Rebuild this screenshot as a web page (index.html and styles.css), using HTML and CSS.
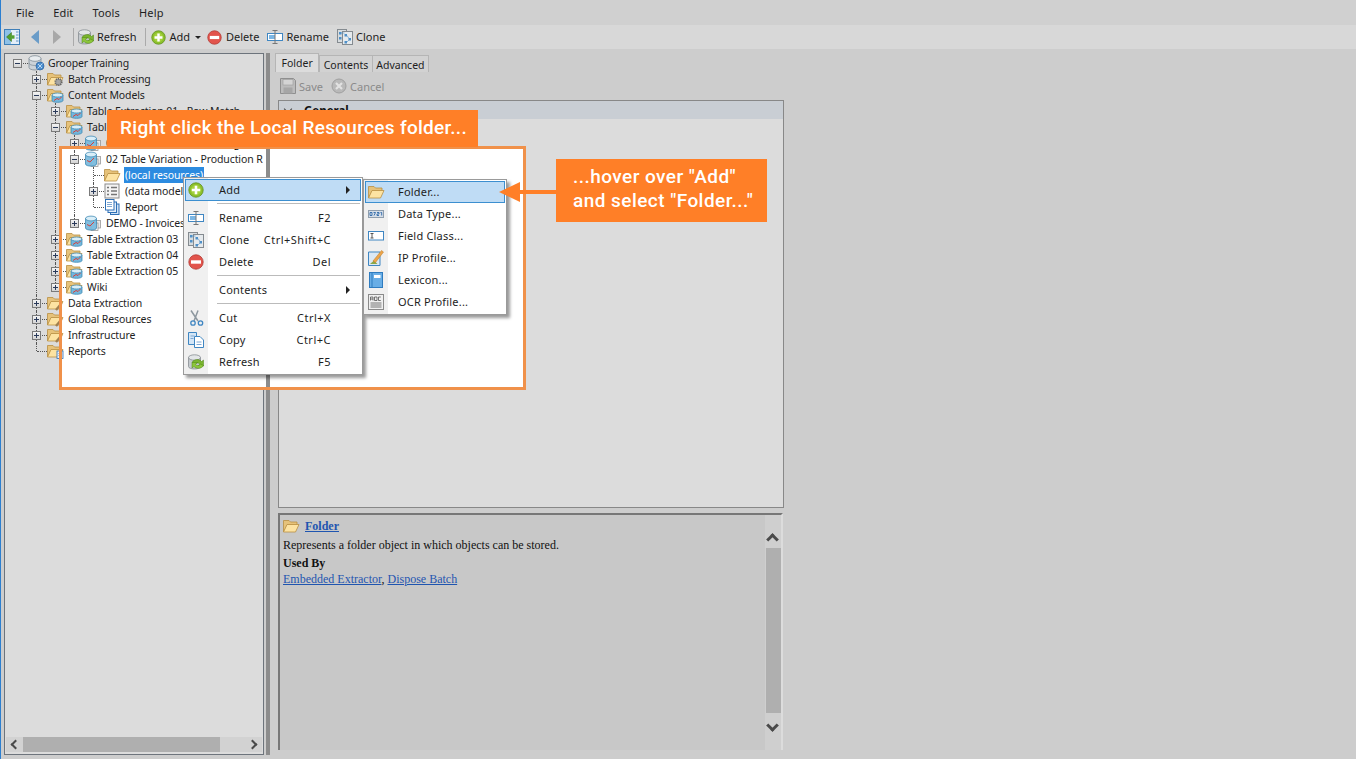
FILE: index.html
```html
<!DOCTYPE html>
<html lang="en">
<head>
<meta charset="utf-8">
<title>Grooper</title>
<link rel="stylesheet" href="styles.css">
</head>
<body>
<svg class="defs" width="0" height="0" aria-hidden="true">
  <defs>
    <symbol id="folder" viewBox="0 0 16 16" overflow="visible">
      <path d="M.5 2.500h5.500l1.500 1.500h6.500v3H4.500L.5 14z" fill="#e6c27a" stroke="#b98f42" stroke-width=".8"/>
      <path d="M.5 14l3.500-7.500h12l-3.500 7.500z" fill="#fde3a2" stroke="#b98f42" stroke-width=".8"/>
    </symbol>
    <symbol id="cyl" viewBox="0 0 16 16">
      <path d="M1 3.500v9c0 3.300 12 3.300 12 0v-9z" fill="#ccd2d8" stroke="#7f8c96" stroke-width=".8"/>
      <ellipse cx="7" cy="3.500" rx="6" ry="2.800" fill="#e8ecef" stroke="#7f8c96" stroke-width=".8"/>
      <path d="M1 8c0 3.300 12 3.300 12 0" fill="none" stroke="#7f8c96" stroke-width=".7"/>
    </symbol>
    <symbol id="root" viewBox="0 0 16 16" overflow="visible">
      <use href="#cyl" width="16" height="16"/>
      <circle cx="12" cy="11" r="4" fill="#4d8fd0" stroke="#2a5f9c" stroke-width=".7"/>
      <path d="M9.500 13.500l5-5M10 9l4 4" stroke="#dcebf8" stroke-width=".8"/>
    </symbol>
    <symbol id="fmodel" viewBox="0 0 16 16" overflow="visible">
      <use href="#folder" width="16" height="16"/>
      <path d="M5 8v5.500c0 2.400 11 2.400 11 0V8z" fill="#74b7dc" stroke="#2f7fae" stroke-width=".7"/>
      <ellipse cx="10.500" cy="8" rx="5.500" ry="2" fill="#d9eef8" stroke="#2f7fae" stroke-width=".7"/>
      <path d="M7 13.500l3-2 2 1 2.500-2.500" stroke="#d6403a" stroke-width="1" fill="none"/>
    </symbol>
    <symbol id="fgear" viewBox="0 0 16 16" overflow="visible">
      <use href="#folder" width="16" height="16"/>
      <circle cx="11.500" cy="11" r="3.200" fill="#a5a5a5" stroke="#666" stroke-width="1.800" stroke-dasharray="1.200 .8"/>
    </symbol>
    <symbol id="fwrench" viewBox="0 0 16 16" overflow="visible">
      <use href="#folder" width="16" height="16"/>
      <path d="M9 15l5-6" stroke="#a08052" stroke-width="2.400"/>
    </symbol>
    <symbol id="freport" viewBox="0 0 16 16" overflow="visible">
      <use href="#folder" width="16" height="16"/>
      <rect x="10" y="8" width="6" height="7.500" fill="#e9f1fa" stroke="#2d6fb5" stroke-width=".8"/>
      <path d="M11.500 10.500h3M11.500 12.500h3" stroke="#2d6fb5" stroke-width=".7"/>
    </symbol>
    <symbol id="model" viewBox="0 0 16 16">
      <rect x="8.500" y="5.500" width="7" height="7.500" fill="#e9e9e9" stroke="#8a8a8a" stroke-width=".7"/>
      <rect x="6" y="8" width="7" height="7.500" fill="#f7f7f7" stroke="#8a8a8a" stroke-width=".7"/>
      <path d="M.5 3.500v9.500c0 2.800 11 2.800 11 0V3.500z" fill="#74b7dc" fill-opacity=".9" stroke="#2f7fae" stroke-width=".7"/>
      <ellipse cx="6" cy="3.500" rx="5.500" ry="2.400" fill="#d9eef8" stroke="#2f7fae" stroke-width=".7"/>
      <path d="M2 9.500l3 1.500 4-4" stroke="#d6403a" stroke-width="1" fill="none"/>
    </symbol>
    <symbol id="datamodel" viewBox="0 0 16 16">
      <rect x="1" y="1" width="14" height="14" fill="#f4f4f4" stroke="#8a8a8a"/>
      <path d="M3 4.500h2M3 8h2M3 11.500h2M7 4.500h6M7 8h6M7 11.500h6" stroke="#757575" stroke-width="1.500"/>
    </symbol>
    <symbol id="report" viewBox="0 0 16 16">
      <rect x="6.500" y="5" width="8.500" height="10.500" fill="#cfe2f5" stroke="#2d6fb5"/>
      <rect x="4" y="3" width="8.500" height="10.500" fill="#e4effa" stroke="#2d6fb5"/>
      <rect x="1.500" y=".5" width="8.500" height="10.500" fill="#fff" stroke="#2d6fb5"/>
      <path d="M3 3.500h5M3 5.500h5M3 7.500h5" stroke="#7da7d3"/>
    </symbol>
    <symbol id="plus" viewBox="0 0 16 16">
      <circle cx="8" cy="8" r="7.200" fill="#8cc02c" stroke="#5f8f1c" stroke-width=".8"/>
      <circle cx="8" cy="8" r="5" fill="#a5d13f"/>
      <path d="M8 3.800v8.400M3.800 8h8.400" stroke="#fff" stroke-width="2.600"/>
    </symbol>
    <symbol id="minus" viewBox="0 0 16 16">
      <circle cx="8" cy="8" r="7.200" fill="#e2544c" stroke="#b33a34" stroke-width=".8"/>
      <rect x="3" y="6.300" width="10" height="3.400" fill="#fff"/>
    </symbol>
    <symbol id="rename" viewBox="0 0 16 16">
      <rect x=".5" y="4.500" width="15" height="7" fill="#fff" stroke="#3f86c2"/>
      <rect x="2" y="6" width="6" height="4" fill="#7cb6e4"/>
      <path d="M5.500 1.500h5M8 1.500v13M5.500 14.500h5" stroke="#777" stroke-width="1" fill="none"/>
    </symbol>
    <symbol id="clone" viewBox="0 0 16 16">
      <rect x=".5" y=".5" width="9" height="13" fill="#d7dcdf" stroke="#858b90"/>
      <rect x="5.500" y="2.500" width="10" height="13" fill="#e6eaed" stroke="#858b90"/>
      <path d="M2 3h2.500v2.500H2zM2 8h2.500v2.500H2zM7.500 5H10v2.500H7.500zM11.500 9H14v2.500h-2.500zM7.500 12H10v2.500H7.500z" fill="#4f90c8"/>
      <path d="M4.500 4h3M10 6.500l2 3M10 13l2-2" stroke="#4f90c8" stroke-width=".6"/>
    </symbol>
    <symbol id="refresh" viewBox="0 0 16 16">
      <path d="M.5 3.500v9c0 3.300 12 3.300 12 0v-9z" fill="#c6cbcf" stroke="#878d92" stroke-width=".8"/>
      <ellipse cx="6.500" cy="3.500" rx="6" ry="2.700" fill="#e3e6e8" stroke="#878d92" stroke-width=".8"/>
      <path d="M4 8.500C5.800 4.800 11.500 4.800 13.500 7.500l2-1.500v6h-5.500l2-1.700c-1.200-1.700-3.700-1.700-5 .2z" fill="#7ab52f" stroke="#4f8319" stroke-width=".5"/>
      <path d="M15.500 11.500c-1.800 3.500-7.500 3.700-9.500 1L4 14V8.500h5.500l-2 1.800c1.200 1.700 3.700 1.700 5-.2z" fill="#8cc63a" stroke="#4f8319" stroke-width=".5"/>
    </symbol>
    <symbol id="scissors" viewBox="0 0 16 16">
      <path d="M3 .5l7 10.500M10 .5L6 11" stroke="#8d979f" stroke-width="1.500" fill="none"/>
      <circle cx="5" cy="13" r="2.200" fill="none" stroke="#3f86c2" stroke-width="1.300"/>
      <circle cx="12.500" cy="13" r="2.200" fill="none" stroke="#3f86c2" stroke-width="1.300"/>
    </symbol>
    <symbol id="copy" viewBox="0 0 16 16">
      <path d="M.5.500h8v12h-8z" fill="#d4e6f6" stroke="#3f86c2"/>
      <path d="M6.500 4.500h5.500l3.500 3.500v7.500h-9z" fill="#fff" stroke="#3f86c2"/>
      <path d="M2.500 4h4M2.500 6.500h3M8.500 10h5M8.500 12.500h5" stroke="#7da7d3"/>
    </symbol>
    <symbol id="datatype" viewBox="0 0 16 16">
      <rect x=".5" y="4.500" width="15" height="7" fill="#d6dee8" stroke="#8f9eae"/>
      <path d="M2 6.500h2v3H2zM5.500 6.500h2L6 9.500M9 6.500h2v1.500H9v1.500h2M12.500 6.500h1.200v3" fill="none" stroke="#2d68a8" stroke-width=".9"/>
    </symbol>
    <symbol id="field" viewBox="0 0 16 16">
      <rect x=".5" y="3.500" width="15" height="8.500" fill="#fff" stroke="#3f86c2"/>
      <path d="M2.500 5.500h3M4 5.500v4.500M2.500 10h3" stroke="#555" fill="none"/>
    </symbol>
    <symbol id="ip" viewBox="0 0 16 16">
      <path d="M.5 2h11.500v13.500H.5z" fill="#dbe8f4" stroke="#3f86c2"/>
      <path d="M2 14l4-3.500 3.500 3.500z" fill="#89a94a"/>
      <path d="M5 11l8.500-10.500L15.500 2 7.500 12.500z" fill="#eda54a" stroke="#b97822" stroke-width=".5"/>
    </symbol>
    <symbol id="lexicon" viewBox="0 0 16 16">
      <rect x="1.500" y=".5" width="13" height="15" fill="#69aee6" stroke="#2f7cc0"/>
      <path d="M4 .5v15" stroke="#2f7cc0"/>
      <rect x="6" y="3" width="6.500" height="3" fill="#fff"/>
    </symbol>
    <symbol id="ocr" viewBox="0 0 16 16">
      <rect x=".5" y=".5" width="15" height="15" fill="#f0f0f0" stroke="#8a8a8a"/>
      <path d="M2.500 6.500V3h2.500v3.500M2.500 5h2.500M6.500 3v3.500h2.500V3H6.500M12.800 3H10.500v3.500h2.300M2.500 9h11M2.500 11h11M2.500 13h11" fill="none" stroke="#555" stroke-width=".8"/>
    </symbol>
    <symbol id="nav" viewBox="0 0 16 16">
      <rect x=".5" y=".5" width="15" height="15" fill="#e4eef8" stroke="#3f7fb8"/>
      <rect x="1" y="1" width="6" height="14" fill="#8fc1e8"/>
      <path d="M7.500 3.500v9L2.500 8z" fill="#52a02c" stroke="#2e6e15" stroke-width=".5"/>
      <rect x="7.500" y="6.300" width="3" height="3.400" fill="#52a02c"/>
      <path d="M12 3h2.500M12 6h2.500M12 9h2.500M12 12h2.500" stroke="#5f94c4"/>
    </symbol>
    <symbol id="save" viewBox="0 0 16 16">
      <path d="M.5.500h13l2 2v13H.5z" fill="#bcbcbc" stroke="#8f8f8f"/>
      <rect x="3" y="1.500" width="10" height="5.500" fill="#d4d4d4" stroke="#9a9a9a" stroke-width=".6"/>
      <rect x="3.500" y="9.500" width="9" height="6" fill="#a6a6a6"/>
    </symbol>
    <symbol id="cancel" viewBox="0 0 16 16">
      <circle cx="8" cy="8" r="7" fill="#b9b9b9" stroke="#a0a0a0"/>
      <path d="M5 5l6 6M11 5l-6 6" stroke="#e2e2e2" stroke-width="2.200"/>
    </symbol>
  </defs>
</svg>

<header class="menubar">
  <span>File</span><span>Edit</span><span>Tools</span><span>Help</span>
</header>

<div class="toolbar">
  <svg class="ic nav-ic"><use href="#nav"/></svg>
  <span class="tri tri-back"></span>
  <span class="tri tri-fwd"></span>
  <span class="tsep"></span>
  <span class="tool"><svg class="ic"><use href="#refresh"/></svg><span class="tt">Refresh</span></span>
  <span class="tsep tsep-b"></span>
  <span class="tool tool-add"><svg class="ic ic-15"><use href="#plus"/></svg><span class="tt">Add</span><span class="drop"></span></span>
  <span class="tool tool-del"><svg class="ic ic-15"><use href="#minus"/></svg><span class="tt">Delete</span></span>
  <span class="tool tool-ren"><svg class="ic"><use href="#rename"/></svg><span class="tt">Rename</span></span>
  <span class="tool tool-clone"><svg class="ic"><use href="#clone"/></svg><span class="tt">Clone</span></span>
</div>

<main class="workspace">
  <section class="treepane">
    <div class="treebody">
      <ul class="tree">
        <li class="last">
          <div class="row"><span class="exp minus"></span><svg class="ic"><use href="#root"/></svg><span class="lbl lbl-root">Grooper Training</span></div>
          <ul>
            <li><div class="row"><span class="exp"></span><svg class="ic"><use href="#fgear"/></svg><span class="lbl">Batch Processing</span></div></li>
            <li>
              <div class="row"><span class="exp minus"></span><svg class="ic"><use href="#fmodel"/></svg><span class="lbl">Content Models</span></div>
              <ul>
                <li><div class="row"><span class="exp"></span><svg class="ic"><use href="#fmodel"/></svg><span class="lbl">Table Extraction 01 - Row Match</span></div></li>
                <li>
                  <div class="row"><span class="exp minus"></span><svg class="ic"><use href="#fmodel"/></svg><span class="lbl">Table Extraction 02 - Variation</span></div>
                  <ul>
                    <li><div class="row"><span class="exp"></span><svg class="ic"><use href="#model"/></svg><span class="lbl">01 Table Variation - Training</span></div></li>
                    <li>
                      <div class="row"><span class="exp minus"></span><svg class="ic"><use href="#model"/></svg><span class="lbl">02 Table Variation - Production R</span></div>
                      <ul>
                        <li><div class="row"><span class="noexp"></span><svg class="ic"><use href="#folder"/></svg><span class="lbl selected">(local resources)</span></div></li>
                        <li><div class="row"><span class="exp"></span><svg class="ic"><use href="#datamodel"/></svg><span class="lbl">(data model)</span></div></li>
                        <li class="last"><div class="row"><span class="noexp"></span><svg class="ic"><use href="#report"/></svg><span class="lbl">Report</span></div></li>
                      </ul>
                    </li>
                    <li class="last"><div class="row"><span class="exp"></span><svg class="ic"><use href="#model"/></svg><span class="lbl">DEMO - Invoices</span></div></li>
                  </ul>
                </li>
                <li><div class="row"><span class="exp"></span><svg class="ic"><use href="#fmodel"/></svg><span class="lbl">Table Extraction 03</span></div></li>
                <li><div class="row"><span class="exp"></span><svg class="ic"><use href="#fmodel"/></svg><span class="lbl">Table Extraction 04</span></div></li>
                <li><div class="row"><span class="exp"></span><svg class="ic"><use href="#fmodel"/></svg><span class="lbl">Table Extraction 05</span></div></li>
                <li class="last"><div class="row"><span class="exp"></span><svg class="ic"><use href="#fmodel"/></svg><span class="lbl">Wiki</span></div></li>
              </ul>
            </li>
            <li><div class="row"><span class="exp"></span><svg class="ic"><use href="#fwrench"/></svg><span class="lbl">Data Extraction</span></div></li>
            <li><div class="row"><span class="exp"></span><svg class="ic"><use href="#fwrench"/></svg><span class="lbl">Global Resources</span></div></li>
            <li><div class="row"><span class="exp"></span><svg class="ic"><use href="#fwrench"/></svg><span class="lbl">Infrastructure</span></div></li>
            <li class="last"><div class="row"><span class="noexp"></span><svg class="ic"><use href="#freport"/></svg><span class="lbl">Reports</span></div></li>
          </ul>
        </li>
      </ul>
    </div>
    <div class="hscroll">
      <span class="chev chev-l"></span>
      <span class="hthumb"></span>
      <span class="chev chev-r"></span>
    </div>
  </section>

  <div class="splitter"></div>

  <section class="rightpane">
    <nav class="tabs">
      <span class="tab active">Folder</span><span class="tab">Contents</span><span class="tab">Advanced</span>
    </nav>
    <div class="subbar">
      <span class="subtool"><svg class="ic"><use href="#save"/></svg>Save</span>
      <span class="subtool"><svg class="ic"><use href="#cancel"/></svg>Cancel</span>
    </div>
    <div class="props">
      <div class="group"><span class="groupchev"></span><b>General</b></div>
    </div>
    <article class="desc">
      <div class="desctext">
        <h4><svg class="ic"><use href="#folder"/></svg><a href="#">Folder</a></h4>
        <p>Represents a folder object in which objects can be stored.</p>
        <p class="used"><b>Used By</b></p>
        <p><a href="#">Embedded Extractor</a>, <a href="#">Dispose Batch</a></p>
      </div>
      <div class="vscroll">
        <span class="chev chev-u"></span>
        <span class="vthumb"></span>
        <span class="chev chev-d"></span>
      </div>
    </article>
  </section>
</main>

<div class="spot-fill"></div>
<div class="spot-frame"></div>

<div class="callout callout-a">Right click the Local Resources folder...</div>
<div class="callout callout-b">...hover over "Add"<br>and select "Folder..."</div>
<div class="arrow"><span class="arrow-head"></span><span class="arrow-line"></span></div>

<div class="ctx ctx-main">
  <div class="mi hot"><svg class="ic"><use href="#plus"/></svg><span class="mt">Add</span><span class="sub"></span></div>
  <div class="ms"></div>
  <div class="mi"><svg class="ic"><use href="#rename"/></svg><span class="mt">Rename</span><span class="key">F2</span></div>
  <div class="mi"><svg class="ic"><use href="#clone"/></svg><span class="mt">Clone</span><span class="key">Ctrl+Shift+C</span></div>
  <div class="mi"><svg class="ic"><use href="#minus"/></svg><span class="mt">Delete</span><span class="key">Del</span></div>
  <div class="ms"></div>
  <div class="mi"><span class="noic"></span><span class="mt">Contents</span><span class="sub"></span></div>
  <div class="ms"></div>
  <div class="mi"><svg class="ic"><use href="#scissors"/></svg><span class="mt">Cut</span><span class="key">Ctrl+X</span></div>
  <div class="mi"><svg class="ic"><use href="#copy"/></svg><span class="mt">Copy</span><span class="key">Ctrl+C</span></div>
  <div class="mi"><svg class="ic"><use href="#refresh"/></svg><span class="mt">Refresh</span><span class="key">F5</span></div>
</div>

<div class="ctx ctx-sub">
  <div class="mi hot"><svg class="ic"><use href="#folder"/></svg><span class="mt">Folder...</span></div>
  <div class="mi"><svg class="ic"><use href="#datatype"/></svg><span class="mt">Data Type...</span></div>
  <div class="mi"><svg class="ic"><use href="#field"/></svg><span class="mt">Field Class...</span></div>
  <div class="mi"><svg class="ic"><use href="#ip"/></svg><span class="mt">IP Profile...</span></div>
  <div class="mi"><svg class="ic"><use href="#lexicon"/></svg><span class="mt">Lexicon...</span></div>
  <div class="mi"><svg class="ic"><use href="#ocr"/></svg><span class="mt">OCR Profile...</span></div>
</div>
</body>
</html>
```

FILE: styles.css
```css
* { box-sizing: border-box; }
html, body { margin: 0; padding: 0; height: 100%; overflow: hidden; }
body {
  width: 1356px;
  height: 759px;
  position: relative;
  display: flex;
  flex-direction: column;
  background: #cdcdcd;
  border-left: 1px solid #2c7fd0;
  font-family: "Noto Sans", "Open Sans", sans-serif;
  font-size: 11px;
  color: #1e1e1e;
}
.defs { position: absolute; }
.ic { width: 16px; height: 16px; flex: none; display: block; overflow: visible; }
.ic-15 { width: 15px; height: 15px; }

.menubar {
  height: 25px;
  flex: none;
  display: flex;
  align-items: center;
  gap: 19px;
  padding-left: 15px;
  background: #d0d0d0;
  font-size: 11px;
  letter-spacing: .15px;
}
.toolbar {
  height: 24px;
  flex: none;
  display: flex;
  align-items: center;
  padding-left: 3px;
  background: #d8d8d8;
  font-size: 11px;
}
.tt { padding-bottom: 2px; }
.tri { width: 0; height: 0; border-style: solid; }
.tri-back { margin-left: 11px; border-width: 7px 8px 7px 0; border-color: transparent #6a9cc8 transparent transparent; }
.tri-fwd { margin-left: 14px; border-width: 7px 0 7px 8px; border-color: transparent transparent transparent #a8a8a8; }
.tsep { width: 1px; height: 18px; background: #aaa; margin: 0 4px 0 12px; }
.tsep-b { margin: 0 5px 0 9px; }
.tool { display: flex; align-items: center; gap: 3px; }
.drop { width: 0; height: 0; margin-left: 2px; border-style: solid; border-width: 3px 3px 0; border-color: #222 transparent transparent; }
.tool-del { margin-left: 6px; gap: 4px; }
.tool-ren { margin-left: 8px; }
.tool-clone { margin-left: 8px; }

.workspace { flex: 1; min-height: 0; display: flex; align-items: stretch; padding: 4px 0 4px 3px; }

.treepane {
  width: 260px;
  flex: none;
  display: flex;
  flex-direction: column;
  border: 1px solid #6d747c;
  background: #dcdcdc;
}
.treebody { flex: 1; min-height: 0; overflow: hidden; padding: 1px 0 0 8px; position: relative; z-index: 2; font-size: 10.5px; letter-spacing: -.1px; }
.tree, .tree ul { list-style: none; margin: 0; padding: 0; }
.tree li { position: relative; margin: 0; }
.tree ul { margin-left: 19px; }
.tree ul > li::before {
  content: "";
  position: absolute;
  left: 4px;
  top: 0;
  bottom: 0;
  border-left: 1px dotted #555;
}
.tree ul > li.last::before { bottom: auto; height: 8px; }
.row { position: relative; height: 16px; display: flex; align-items: center; white-space: nowrap; }
.exp {
  width: 9px;
  height: 9px;
  flex: none;
  margin-right: 6px;
  position: relative;
  z-index: 1;
  border: 1px solid #7a7a7a;
  background: linear-gradient(#f4f4f4, #d4d4d4);
}
.exp::before { content: ""; position: absolute; left: 1px; top: 3px; width: 5px; height: 1px; background: #2a3a5a; }
.exp:not(.minus)::after { content: ""; position: absolute; left: 3px; top: 1px; width: 1px; height: 5px; background: #2a3a5a; }
.noexp { width: 15px; flex: none; }
.row::before {
  content: "";
  position: absolute;
  left: 5px;
  width: 10px;
  top: 8px;
  border-top: 1px dotted #555;
}
.lbl { margin-left: 4px; padding: 0 1px; line-height: 16px; }
.lbl-root { margin-left: 3px; letter-spacing: -.2px; }
.selected { background: #2c8be0; color: #fff; }

.hscroll { height: 15px; margin: 0 1px 2px; flex: none; display: flex; align-items: center; background: #d2d2d2; position: relative; }
.hthumb { width: 197px; height: 15px; margin-left: 17px; background: #afafaf; }
.chev { display: block; width: 7px; height: 7px; border: solid #4a4a4a; border-width: 2px 0 0 2px; flex: none; position: absolute; }
.chev-l { left: 6px; top: 4px; transform: rotate(-45deg); }
.chev-r { right: 6px; top: 4px; transform: rotate(135deg); }
.chev-u { left: 3px; top: 20px; width: 9px; height: 9px; border-width: 3px 0 0 3px; transform: rotate(45deg); }
.chev-d { left: 3px; bottom: 20px; width: 9px; height: 9px; border-width: 3px 0 0 3px; transform: rotate(225deg); }

.splitter {
  width: 4px;
  flex: none;
  margin-left: 2px;
  background: #8c8c8c;
  position: relative;
  z-index: 2;
}

.rightpane { width: 513px; flex: none; display: flex; flex-direction: column; margin-left: 5px; }
.tabs { height: 19px; display: flex; align-items: flex-end; font-size: 10.5px; flex: none; }
.tab { height: 17px; padding: 1px 3.500px 0; display: flex; align-items: center; border: 1px solid #b5b5b5; border-bottom: 0; margin-left: -1px; background: #d2d2d2; }
.tab:first-child { margin-left: 0; }
.tab.active { height: 19px; background: #dcdcdc; padding: 0 5.500px; margin-right: 1px; }
.subbar { height: 28px; flex: none; padding: 6px 0 0 5px; display: flex; align-items: flex-start; gap: 8px; color: #8a8a8a; font-size: 11px; }
.subtool { display: flex; align-items: center; gap: 3px; }
.props { height: 408px; flex: none; margin-left: 3px; width: 506px; border: 1px solid #888; background: #dcdcdc; position: relative; }
.group { height: 18px; background: #c9ced4; display: flex; align-items: center; padding-left: 25px; font-size: 11.5px; position: relative; }
.group b { color: #111; }
.groupchev { position: absolute; left: 6px; top: 5px; width: 6px; height: 6px; border: solid #444; border-width: 0 1.500px 1.500px 0; transform: rotate(45deg); }

.desc { flex: 1; min-height: 0; margin: 5px 0 5px 3px; width: 505px; display: flex; background: #c8c8c8; border: solid #777; border-width: 2px 2px 0 2px; border-right-color: #dcdcdc; }
.desctext { flex: 1; padding: 3px 3px; font-family: "Liberation Serif", serif; font-size: 12px; color: #111; line-height: 14px; letter-spacing: 0; }
.desctext h4 { display: flex; align-items: center; gap: 6px; margin: 0 0 4px; font-size: 12px; line-height: 16px; }
.desctext p { margin: 0 0 4px; }
.desctext p.used { margin-bottom: 2px; }
.desctext a { color: #1f55b0; }
.vscroll { width: 16px; position: relative; flex: none; background: #cfcfcf; }
.vthumb { position: absolute; left: 1px; right: 0; top: 33px; height: 165px; background: #afafaf; }

.spot-fill { position: absolute; left: 58px; top: 146px; width: 467px; height: 244px; background: #fff; z-index: 1; }
.spot-frame { position: absolute; left: 58px; top: 146px; width: 467px; height: 244px; border: 3px solid #f0914a; z-index: 3; }

.callout { position: absolute; z-index: 4; background: #ff7f27; color: #fff; font-family: Roboto, sans-serif; font-weight: 500; font-size: 19px; letter-spacing: .3px; }
.callout-a { left: 106px; top: 110px; width: 371px; height: 37px; line-height: 36px; padding-left: 13px; }
.callout-b { left: 555px; top: 159px; width: 211px; height: 63px; padding: 6px 0 0 17px; line-height: 24px; letter-spacing: .45px; }

.arrow { position: absolute; z-index: 6; left: 498px; top: 182px; display: flex; align-items: center; }
.arrow-head { width: 0; height: 0; border-style: solid; border-width: 10px 21px 10px 0; border-color: transparent #ff7f27 transparent transparent; }
.arrow-line { width: 36px; height: 4px; background: #ff7f27; }

.ctx {
  position: absolute;
  z-index: 5;
  background: linear-gradient(to right, #f0f0f0 24px, #fff 24px);
  border: 1px solid #9a9a9a;
  padding: 1px;
  box-shadow: 3px 3px 3px rgba(0, 0, 0, .4);
  font-size: 11px;
  letter-spacing: .2px;
}
.ctx-main { left: 182px; top: 177px; width: 180px; height: 198px; }
.ctx-sub { left: 362px; top: 179px; width: 144px; height: 136px; }
.mi { height: 22px; display: flex; align-items: center; padding: 0 29px 0 2px; position: relative; border: 1px solid transparent; }
.noic { width: 16px; flex: none; }
.mt { margin-left: 14px; flex: 1; white-space: nowrap; padding-bottom: 2px; }
.ctx-main .mt { margin-left: 15px; }
.key { white-space: nowrap; padding-bottom: 2px; letter-spacing: .5px; }
.hot { background: #bfdcf5; border-color: #3c8fd0; }
.sub { position: absolute; right: 10px; top: 6px; width: 0; height: 0; border-style: solid; border-width: 4px 0 4px 4px; border-color: transparent transparent transparent #222; }
.ms { height: 6px; margin-left: 32px; margin-right: 1px; position: relative; }
.ms::before { content: ""; position: absolute; left: 0; right: 0; top: 2px; height: 1px; background: #bbb; }
```
